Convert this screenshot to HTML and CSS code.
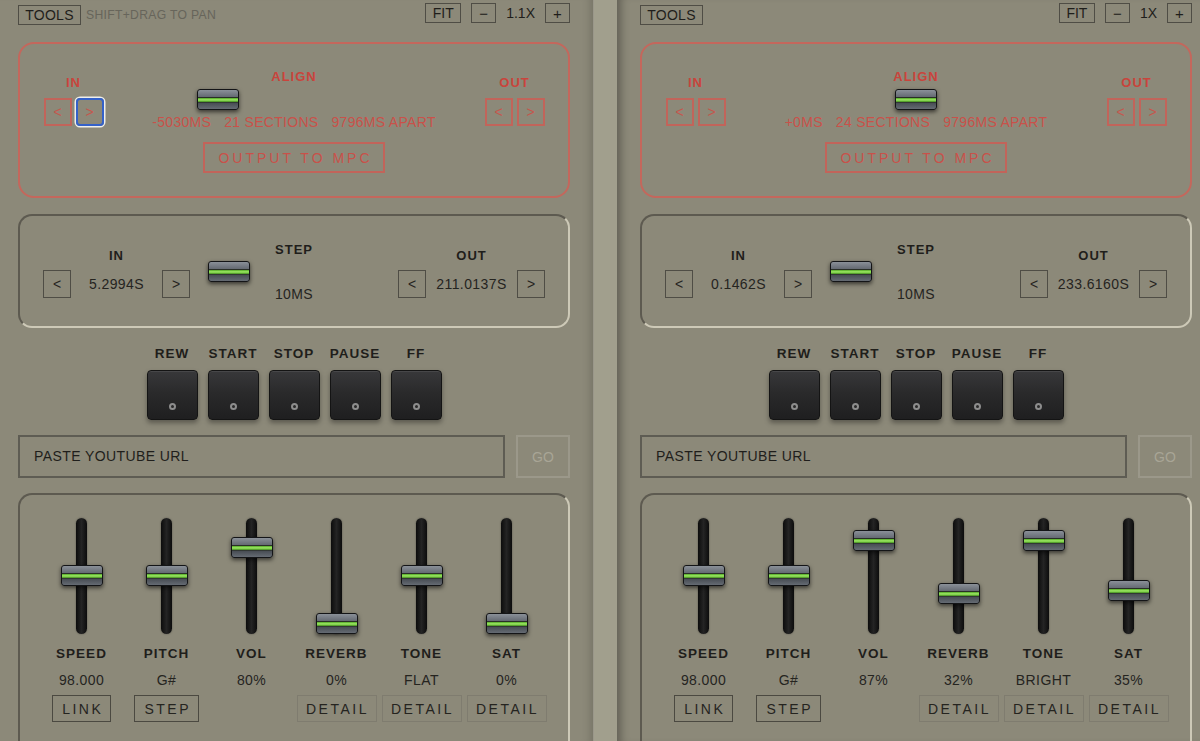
FILE: index.html
```html
<!DOCTYPE html>
<html lang="en">
<head>
  <meta charset="UTF-8" />
  <meta name="viewport" content="width=device-width, initial-scale=1.0" />
  <title>Sampler Deck</title>
  <link rel="stylesheet" href="styles.css">
</head>
<body>
  <div class="app">

    <!-- left deck -->
    <section class="pane pane-left">
      <div class="topbar">
        <button class="btn btn-tools">TOOLS</button>
        <span class="hint">SHIFT+DRAG TO PAN</span>
        <div class="zoom">
          <button class="btn btn-fit">FIT</button>
          <button class="btn btn-sq">&minus;</button>
          <span class="zoom-val">1.1X</span>
          <button class="btn btn-sq">+</button>
        </div>
      </div>

      <div class="align-box">
        <div class="side">
          <div class="lbl">IN</div>
          <div class="pair">
            <button class="arrow red">&lt;</button>
            <button class="arrow red focus">&gt;</button>
          </div>
        </div>
        <div class="center">
          <div class="lbl">ALIGN</div>
          <div class="hslider"><div class="knob" style="left: 3px"></div></div>
          <div class="align-vals"><span>-5030MS</span><span>21 SECTIONS</span><span>9796MS APART</span></div>
          <button class="btn-output">OUTPUT TO MPC</button>
        </div>
        <div class="side">
          <div class="lbl">OUT</div>
          <div class="pair">
            <button class="arrow red">&lt;</button>
            <button class="arrow red">&gt;</button>
          </div>
        </div>
      </div>

      <div class="step-box">
        <div class="side">
          <div class="lbl">IN</div>
          <div class="nudge">
            <button class="arrow">&lt;</button>
            <span class="val">5.2994S</span>
            <button class="arrow">&gt;</button>
          </div>
        </div>
        <div class="center">
          <div class="lbl">STEP</div>
          <div class="hslider"><div class="knob" style="left: 14px"></div></div>
          <div class="val">10MS</div>
        </div>
        <div class="side">
          <div class="lbl">OUT</div>
          <div class="nudge">
            <button class="arrow">&lt;</button>
            <span class="val">211.0137S</span>
            <button class="arrow">&gt;</button>
          </div>
        </div>
      </div>

      <div class="transport">
        <div class="key"><span class="lbl">REW</span><button class="pad"><i class="dot"></i></button></div>
        <div class="key"><span class="lbl">START</span><button class="pad"><i class="dot"></i></button></div>
        <div class="key"><span class="lbl">STOP</span><button class="pad"><i class="dot"></i></button></div>
        <div class="key"><span class="lbl">PAUSE</span><button class="pad"><i class="dot"></i></button></div>
        <div class="key"><span class="lbl">FF</span><button class="pad"><i class="dot"></i></button></div>
      </div>

      <div class="url-row">
        <div class="url-input">PASTE YOUTUBE URL</div>
        <button class="btn-go">GO</button>
      </div>

      <div class="mixer">
        <div class="channel">
          <div class="fader"><div class="track"></div><div class="knob" style="top: 47px"></div></div>
          <div class="lbl">SPEED</div>
          <div class="val">98.000</div>
          <button class="chip">LINK</button>
        </div>
        <div class="channel">
          <div class="fader"><div class="track"></div><div class="knob" style="top: 47px"></div></div>
          <div class="lbl">PITCH</div>
          <div class="val">G#</div>
          <button class="chip">STEP</button>
        </div>
        <div class="channel">
          <div class="fader"><div class="track"></div><div class="knob" style="top: 19px"></div></div>
          <div class="lbl">VOL</div>
          <div class="val">80%</div>
        </div>
        <div class="channel">
          <div class="fader"><div class="track"></div><div class="knob" style="top: 95px"></div></div>
          <div class="lbl">REVERB</div>
          <div class="val">0%</div>
          <button class="chip chip-faint">DETAIL</button>
        </div>
        <div class="channel">
          <div class="fader"><div class="track"></div><div class="knob" style="top: 47px"></div></div>
          <div class="lbl">TONE</div>
          <div class="val">FLAT</div>
          <button class="chip chip-faint">DETAIL</button>
        </div>
        <div class="channel">
          <div class="fader"><div class="track"></div><div class="knob" style="top: 95px"></div></div>
          <div class="lbl">SAT</div>
          <div class="val">0%</div>
          <button class="chip chip-faint">DETAIL</button>
        </div>
      </div>
    </section>

    <div class="divider"></div>

    <!-- right deck -->
    <section class="pane pane-right">
      <div class="topbar">
        <button class="btn btn-tools">TOOLS</button>
        <div class="zoom">
          <button class="btn btn-fit">FIT</button>
          <button class="btn btn-sq">&minus;</button>
          <span class="zoom-val">1X</span>
          <button class="btn btn-sq">+</button>
        </div>
      </div>

      <div class="align-box">
        <div class="side">
          <div class="lbl">IN</div>
          <div class="pair">
            <button class="arrow red">&lt;</button>
            <button class="arrow red">&gt;</button>
          </div>
        </div>
        <div class="center">
          <div class="lbl">ALIGN</div>
          <div class="hslider"><div class="knob" style="left: 79px"></div></div>
          <div class="align-vals"><span>+0MS</span><span>24 SECTIONS</span><span>9796MS APART</span></div>
          <button class="btn-output">OUTPUT TO MPC</button>
        </div>
        <div class="side">
          <div class="lbl">OUT</div>
          <div class="pair">
            <button class="arrow red">&lt;</button>
            <button class="arrow red">&gt;</button>
          </div>
        </div>
      </div>

      <div class="step-box">
        <div class="side">
          <div class="lbl">IN</div>
          <div class="nudge">
            <button class="arrow">&lt;</button>
            <span class="val">0.1462S</span>
            <button class="arrow">&gt;</button>
          </div>
        </div>
        <div class="center">
          <div class="lbl">STEP</div>
          <div class="hslider"><div class="knob" style="left: 14px"></div></div>
          <div class="val">10MS</div>
        </div>
        <div class="side">
          <div class="lbl">OUT</div>
          <div class="nudge">
            <button class="arrow">&lt;</button>
            <span class="val">233.6160S</span>
            <button class="arrow">&gt;</button>
          </div>
        </div>
      </div>

      <div class="transport">
        <div class="key"><span class="lbl">REW</span><button class="pad"><i class="dot"></i></button></div>
        <div class="key"><span class="lbl">START</span><button class="pad"><i class="dot"></i></button></div>
        <div class="key"><span class="lbl">STOP</span><button class="pad"><i class="dot"></i></button></div>
        <div class="key"><span class="lbl">PAUSE</span><button class="pad"><i class="dot"></i></button></div>
        <div class="key"><span class="lbl">FF</span><button class="pad"><i class="dot"></i></button></div>
      </div>

      <div class="url-row">
        <div class="url-input">PASTE YOUTUBE URL</div>
        <button class="btn-go">GO</button>
      </div>

      <div class="mixer">
        <div class="channel">
          <div class="fader"><div class="track"></div><div class="knob" style="top: 47px"></div></div>
          <div class="lbl">SPEED</div>
          <div class="val">98.000</div>
          <button class="chip">LINK</button>
        </div>
        <div class="channel">
          <div class="fader"><div class="track"></div><div class="knob" style="top: 47px"></div></div>
          <div class="lbl">PITCH</div>
          <div class="val">G#</div>
          <button class="chip">STEP</button>
        </div>
        <div class="channel">
          <div class="fader"><div class="track"></div><div class="knob" style="top: 12px"></div></div>
          <div class="lbl">VOL</div>
          <div class="val">87%</div>
        </div>
        <div class="channel">
          <div class="fader"><div class="track"></div><div class="knob" style="top: 65px"></div></div>
          <div class="lbl">REVERB</div>
          <div class="val">32%</div>
          <button class="chip chip-faint">DETAIL</button>
        </div>
        <div class="channel">
          <div class="fader"><div class="track"></div><div class="knob" style="top: 12px"></div></div>
          <div class="lbl">TONE</div>
          <div class="val">BRIGHT</div>
          <button class="chip chip-faint">DETAIL</button>
        </div>
        <div class="channel">
          <div class="fader"><div class="track"></div><div class="knob" style="top: 62px"></div></div>
          <div class="lbl">SAT</div>
          <div class="val">35%</div>
          <button class="chip chip-faint">DETAIL</button>
        </div>
      </div>
    </section>

  </div>
</body>
</html>
```

FILE: styles.css
```css
* {
  box-sizing: border-box;
}
body {
  margin: 0;
  background: #8c8979;
  font-family: "Liberation Sans", Arial, sans-serif;
  color: #1f1e1b;
}
button {
  font-family: inherit;
  background: none;
  color: inherit;
  margin: 0;
  cursor: pointer;
}
.app {
  display: flex;
  height: 741px;
  overflow: hidden;
}
.pane {
  flex: none;
  background: #8c8979;
}
.pane-left {
  width: 593px;
  padding: 0 23px 0 18px;
  box-shadow: inset -10px 0 10px -8px rgba(0, 0, 0, 0.18);
}
.pane-right {
  width: 583px;
  padding: 0 8px 0 23px;
  box-shadow: inset 10px 0 8px -6px rgba(0, 0, 0, 0.3);
}
.divider {
  flex: none;
  width: 24px;
  background: #a19f8d;
  border-left: 1px solid #9a978a;
}

/* top bar */
.topbar {
  display: flex;
  align-items: flex-start;
  height: 42px;
}
.btn {
  height: 20px;
  border: 1.5px solid #4f4d45;
  font-size: 14px;
  line-height: 17px;
  padding: 0;
  color: #1f1e1b;
}
.btn-tools {
  margin-top: 5px;
  width: 63px;
  letter-spacing: 0.3px;
}
.hint {
  margin: 8px 0 0 5px;
  font-size: 12.2px;
  letter-spacing: 0.3px;
  color: #67655b;
}
.zoom {
  margin-left: auto;
  margin-top: 3px;
  display: flex;
  align-items: center;
  gap: 10px;
}
.btn-fit {
  width: 36px;
}
.btn-sq {
  width: 25px;
  font-size: 15px;
}
.zoom-val {
  font-size: 14px;
}

/* shared labels */
.lbl {
  font-size: 13px;
  font-weight: bold;
  letter-spacing: 1px;
  line-height: 16px;
  text-align: center;
  white-space: nowrap;
}
.val {
  font-size: 14px;
  letter-spacing: 0.4px;
  line-height: 16px;
  text-align: center;
  white-space: nowrap;
  color: #25241f;
}

/* align box */
.align-box {
  height: 156px;
  border: 2px solid #c4675c;
  border-radius: 16px;
  padding: 25px 23px 0;
  display: grid;
  grid-template-columns: 61px 1fr 61px;
  color: #c9443c;
}
.side {
  padding-top: 6px;
  display: flex;
  flex-direction: column;
  align-items: center;
}
.pair {
  display: flex;
  gap: 4px;
  margin-top: 7px;
}
.arrow {
  width: 28px;
  height: 28px;
  padding: 0;
  border: 1.5px solid #4f4d45;
  font-size: 14px;
  color: #25241f;
}
.arrow.red {
  border: 2px solid #c2645a;
  color: #c4574e;
}
.arrow.focus {
  border: 2px solid #3461c9;
  border-radius: 4px;
  box-shadow: 0 0 0 1.5px #eeeeea;
}
.center {
  display: flex;
  flex-direction: column;
  align-items: center;
}
.hslider {
  position: relative;
  width: 200px;
  height: 21px;
  margin-top: 4px;
}
.hslider .knob {
  top: 0;
}
.align-vals {
  margin-top: 4px;
  display: flex;
  gap: 13px;
  font-size: 14px;
  line-height: 16px;
  letter-spacing: 0.3px;
  color: #c9514a;
}
.btn-output {
  margin-top: 12px;
  width: 182px;
  height: 31px;
  padding: 0 0 0 3px;
  border: 2px solid #c2645a;
  font-size: 14px;
  letter-spacing: 3px;
  color: #c9514a;
}

/* knob used by every slider */
.knob {
  position: absolute;
  width: 42px;
  height: 21px;
  border: 1px solid #141517;
  border-radius: 3px;
  background: linear-gradient(to bottom,
    #8a9098 0%, #656a73 36%, #20261a 40%, #5fb431 44%,
    #a0ea66 52%, #5fb431 60%, #20261a 64%, #474c53 68%, #656b73 100%);
  box-shadow: 0 2px 4px rgba(0, 0, 0, 0.6);
}

/* step box */
.step-box {
  margin-top: 16px;
  height: 114px;
  border: 2px solid;
  border-color: #5d5a50 #cdc9b7 #cdc9b7 #5d5a50;
  border-radius: 14px;
  padding: 26px 23px 0;
  display: grid;
  grid-template-columns: 147px 1fr 147px;
}
.step-box .hslider {
  margin-top: 3px;
}
.step-box .center > .val {
  margin-top: 4px;
}
.nudge {
  display: flex;
  align-items: center;
  justify-content: space-between;
  width: 147px;
  margin-top: 6px;
}

/* transport */
.transport {
  margin-top: 18px;
  display: flex;
  justify-content: center;
  gap: 10px;
}
.key {
  width: 51px;
  display: flex;
  flex-direction: column;
  align-items: center;
  gap: 8px;
}
.key .lbl {
  font-size: 13.5px;
}
.pad {
  position: relative;
  width: 51px;
  height: 50px;
  padding: 0;
  border: 1px solid #141414;
  border-radius: 4px;
  background: linear-gradient(to bottom, #38383a 0%, #2a2a2b 45%, #1f1f20 100%);
  box-shadow: 0 3px 5px rgba(0, 0, 0, 0.35), inset 0 1px 0 rgba(255, 255, 255, 0.08);
}
.dot {
  position: absolute;
  left: 50%;
  bottom: 9px;
  width: 7px;
  height: 7px;
  margin-left: -3.5px;
  border-radius: 50%;
  border: 2px solid #8d8d8d;
  background: #2a2a2a;
}

/* url */
.url-row {
  margin-top: 15px;
  display: flex;
  gap: 11px;
  height: 43px;
}
.url-input {
  flex: 1;
  border: 2px solid #5e5c53;
  padding-left: 14px;
  font-size: 14px;
  letter-spacing: 0.4px;
  line-height: 39px;
  color: #1f1e1b;
}
.btn-go {
  width: 54px;
  padding: 0;
  border: 2px solid #9b988a;
  font-size: 14px;
  color: #a8a596;
}

/* mixer */
.mixer {
  margin-top: 15px;
  height: 270px;
  border: 2px solid;
  border-color: #5d5a50 #cdc9b7 #cdc9b7 #5d5a50;
  border-radius: 14px;
  padding: 23px 19px 0;
  display: grid;
  grid-template-columns: repeat(6, 1fr);
}
.channel {
  display: flex;
  flex-direction: column;
  align-items: center;
}
.fader {
  position: relative;
  width: 42px;
  height: 116px;
}
.track {
  width: 11px;
  height: 116px;
  margin: 0 auto;
  border-radius: 6px;
  background: linear-gradient(to right, #0c0c0c, #242424 50%, #0c0c0c);
  box-shadow: 0 0 2px rgba(0, 0, 0, 0.4);
}
.fader .knob {
  left: 0;
}
.channel .lbl {
  margin-top: 12px;
  font-size: 13.5px;
}
.channel .val {
  margin-top: 10px;
}
.chip {
  margin-top: 7px;
  height: 27px;
  padding: 0 7px 0 9.5px;
  border: 1.5px solid #4b4941;
  font-size: 14px;
  letter-spacing: 2.5px;
  color: #25241f;
}
.chip-faint {
  width: 80px;
  padding: 0 0 0 2px;
  border-color: #7f7c6f;
}
```
